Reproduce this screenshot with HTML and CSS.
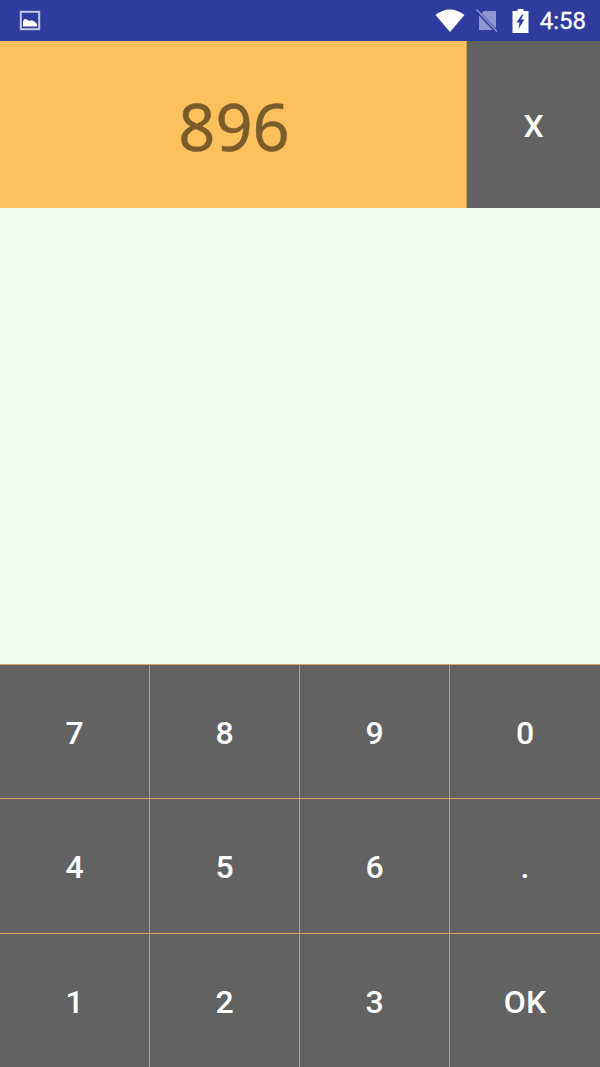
FILE: index.html
```html
<!DOCTYPE html>
<html lang="en">
<head>
<meta charset="utf-8">
<title>Keypad</title>
<link rel="stylesheet" href="styles.css">
</head>
<body>
<div class="app">
  <header class="status">
    <svg class="ic-image" width="22" height="21" viewBox="0 0 22 21"><rect x="1.800" y="1.800" width="18.400" height="17.400" fill="none" stroke="#c3c8e6" stroke-width="2"/><path d="M4 16.500V11.500Q5 8.500 7 9.200Q9 10 10.500 11Q12.500 9.800 14 10.800Q16 11.500 18 14V16.500Z" fill="#fff"/></svg>
    <div class="status-right">
      <svg class="ic-wifi" width="30" height="23" viewBox="0 0 30 23"><path d="M0.500 6Q14.800 -5 29.500 6L15 23Z" fill="#fff"/></svg>
      <svg class="ic-sim" width="22" height="25" viewBox="0 0 22 25"><path d="M8 3H20V22H3V8Z" fill="#8f97cf"/><path d="M0 2L21 24" stroke="#2f3c9e" stroke-width="3.500"/><path d="M0.500 1.500L21 23.500" stroke="#8f97cf" stroke-width="1.400"/></svg>
      <svg class="ic-batt" width="17" height="25" viewBox="0 0 17 25"><path fill-rule="evenodd" d="M5.500 1H11.500V3H16.500V25H0.500V3H5.500ZM10 6.500L4.500 14.500H7.500L6.500 21L12.500 11.500H9L11.500 6.500Z" fill="#fff"/></svg>
      <span class="clock">4:58</span>
    </div>
  </header>
  <section class="top">
    <div class="display">896</div>
    <button class="close">X</button>
  </section>
  <main class="content"></main>
  <section class="keypad">
    <button class="key">7</button><button class="key">8</button><button class="key">9</button><button class="key">0</button>
    <button class="key">4</button><button class="key">5</button><button class="key">6</button><button class="key">.</button>
    <button class="key">1</button><button class="key">2</button><button class="key">3</button><button class="key">OK</button>
  </section>
</div>
</body>
</html>
```
FILE: styles.css
```css
* { box-sizing: border-box; }
html, body { margin: 0; padding: 0; }
body { width: 600px; height: 1067px; overflow: hidden; font-family: Roboto, sans-serif; }
.app { display: flex; flex-direction: column; height: 1067px; background: #eeffee; }
.status { height: 41px; flex: none; background: #2f3c9e; display: flex; align-items: center; justify-content: space-between; padding: 0 14px 0 19px; }
.status-right { display: flex; align-items: center; }
.ic-wifi { margin-right: 11px; }
.ic-sim { margin-right: 14px; }
.ic-batt { margin-right: 11px; }
.clock { color: #fff; font-size: 24px; font-weight: 400; -webkit-text-stroke: 0.3px #fff; }
.top { height: 167px; flex: none; display: flex; }
.display { width: 467px; padding: 3px 0 0 2px; background: #fcc05c; border-right: 1px solid #c9a05a; color: #7a5c2a; font-family: "Noto Sans", sans-serif; font-size: 65px; -webkit-text-stroke: 0.4px #7a5c2a; display: flex; align-items: center; justify-content: center; }
button { border: 0; margin: 0; padding: 0; font-family: Roboto, sans-serif; color: #fff; background: #626262; font-weight: 500; }
.close { flex: 1; padding-top: 2px; font-size: 32px; }
.content { flex: 1; min-height: 0; }
.keypad { height: 403px; flex: none; display: grid; grid-template-columns: 150px 150px 150px 150px; grid-template-rows: 134px 135px 134px; background: #626262; }
.key { padding-top: 2px; font-size: 32px; border-top: 1px solid #d0ad62; border-right: 1px solid #b0a68e; }
.key:nth-child(4n) { border-right: 0; }
```
